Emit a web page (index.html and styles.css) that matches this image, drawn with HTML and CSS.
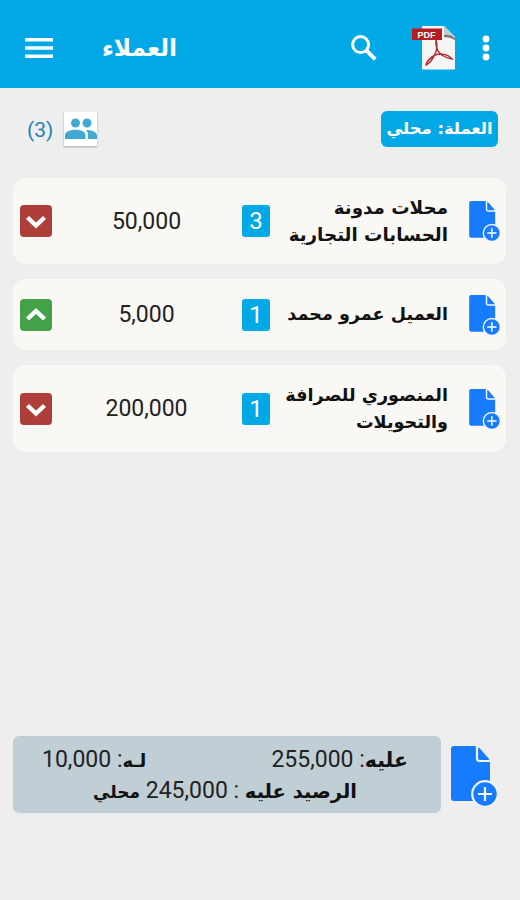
FILE: index.html
```html
<!DOCTYPE html>
<html lang="ar">
<head>
<meta charset="utf-8">
<title>العملاء</title>
<link rel="stylesheet" href="styles.css">
</head>
<body>
<svg class="defs" width="0" height="0">
  <symbol id="doc" viewBox="0 0 46 60">
    <path fill="#167cfd" d="M3 0H26L39 15V55H3Q0 55 0 52V3Q0 0 3 0Z"/>
    <path d="M28 1.500L38.500 13.500H28Z" fill="#167cfd"/>
    <path d="M26 0V12.500Q26 15 28.500 15H39.500" fill="none" stroke="#f5f7fa" stroke-width="2.2"/>
    <circle cx="34" cy="48" r="12.800" fill="#167cfd" stroke="#f0f3f7" stroke-width="2.2"/>
    <path d="M34 41V55M27 48H41" stroke="#fff" stroke-width="2.2"/>
  </symbol>
  <symbol id="down" viewBox="0 0 32 32"><path d="M7.500 12.500L16 20.500L24.500 12.500" fill="none" stroke="#fff" stroke-width="4.400"/></symbol>
  <symbol id="up" viewBox="0 0 32 32"><path d="M7.500 20L16 12L24.500 20" fill="none" stroke="#fff" stroke-width="4.400"/></symbol>
</svg>
<header class="bar">
  <svg class="menu" viewBox="0 0 28 20"><path d="M0 1.8H28M0 10H28M0 18.2H28" stroke="#fff" stroke-width="3.4"/></svg>
  <h1 class="title" dir="rtl">العملاء</h1>
  <svg class="search" viewBox="0 0 26 26"><circle cx="9.6" cy="9.6" r="8" fill="none" stroke="#fff" stroke-width="3"/><path d="M15.3 15.3L24.3 24.3" stroke="#fff" stroke-width="4"/></svg>
  <svg class="pdf" viewBox="0 0 44 44">
    <path d="M10 0H32L43 11V43.5H10Z" fill="#f5f5f5"/>
    <path d="M32 0L43 11H34Q32 11 32 9Z" fill="#c8cccf"/>
    <path d="M32 9Q38 8 43 12V14Q38 11 32 11Z" fill="#777"/>
    <path d="M24 14C25.500 19 25 24 23 28C21 33 17 38 14 39C14 36 19 31 23 29C29 27 36 28 40 33C34 32 28 29 25.500 24C24 20 23.500 17 24 14Z" fill="none" stroke="#b42c32" stroke-width="1.5"/>
    <path d="M0 2.500H30V14H0Z" fill="#b71c20"/>
    <text class="pdf-label" x="14.5" y="11.800" text-anchor="middle">PDF</text>
  </svg>
  <svg class="dots" viewBox="0 0 8 26"><g fill="#fff"><circle cx="4" cy="4" r="3.4"/><circle cx="4" cy="13" r="3.4"/><circle cx="4" cy="22" r="3.4"/></g></svg>
</header>
<section class="filters">
  <span class="count">(3)</span>
  <span class="people"><svg viewBox="0 0 32 22"><g fill="#3fa9d1"><circle cx="10.5" cy="5" r="4.5"/><circle cx="22" cy="5" r="4.5"/><path d="M0 21V17C0 13.500 6 11.800 10.500 11.800S20.500 13.500 20.500 17V21ZM21 12C26 11.800 32 14 32 17.500V21H23V17C23 15 22.500 13.500 21 12Z"/></g></svg></span>
  <span class="currency" dir="rtl">العملة: محلي</span>
</section>
<main class="list">
  <article class="card">
    <svg class="state red"><use href="#down"/></svg>
    <span class="amount">50,000</span>
    <span class="num">3</span>
    <span class="name roomy" dir="rtl">محلات مدونة<br>الحسابات التجارية</span>
    <svg class="doc"><use href="#doc"/></svg>
  </article>
  <article class="card short">
    <svg class="state green"><use href="#up"/></svg>
    <span class="amount">5,000</span>
    <span class="num">1</span>
    <span class="name" dir="rtl">العميل عمرو محمد</span>
    <svg class="doc"><use href="#doc"/></svg>
  </article>
  <article class="card">
    <svg class="state red"><use href="#down"/></svg>
    <span class="amount">200,000</span>
    <span class="num">1</span>
    <span class="name" dir="rtl">المنصوري للصرافة<br>والتحويلات</span>
    <svg class="doc"><use href="#doc"/></svg>
  </article>
</main>
<footer class="foot">
  <div class="totals" dir="rtl">
    <div class="row"><span><b class="debit">عليه</b>: 255,000</span><span><b>لـه</b>: 10,000</span></div>
    <div class="balance"><b class="label">الرصيد عليه</b> : 245,000 <b class="unit">محلي</b></div>
  </div>
  <svg class="doc big"><use href="#doc"/></svg>
</footer>
</body>
</html>
```

FILE: styles.css
```css
* { box-sizing: border-box; }
body { margin: 0; width: 520px; height: 900px; overflow: hidden; background: #eee; color: #222; font-family: Roboto, "DejaVu Sans", sans-serif; display: flex; flex-direction: column; }
svg { display: block; flex: none; }
.defs { position: absolute; }
.bar { height: 88px; flex: none; background: #03a9e7; color: #fff; display: flex; align-items: center; padding: 7px 30px 0 25px; }
.menu { width: 28px; height: 20px; }
.title { margin: 0 0 0 49px; width: 75px; font: bold 23.3px/30px "DejaVu Sans", sans-serif; white-space: nowrap; }
.search { width: 26px; height: 26px; margin-left: 174px; }
.pdf { width: 44px; height: 44px; margin-left: 35px; }
.pdf-label { font: bold 9px "Liberation Sans", sans-serif; fill: #fff; }
.dots { width: 8px; height: 26px; margin-left: 26px; }
.filters { height: 90px; flex: none; display: flex; align-items: flex-start; padding: 23px 22px 0 27px; }
.count { width: 37px; font-size: 21px; line-height: 38px; color: #2583b5; }
.people { width: 33px; height: 34px; margin-top: 1px; background: #fff; box-shadow: 0 1px 2px #aaa; display: flex; align-items: center; justify-content: center; }
.people svg { width: 32px; height: 22px; }
.currency { margin-left: auto; width: 117px; height: 36px; border-radius: 6px; background: #03a9e7; color: #fff; font: bold 16.4px/36px "DejaVu Sans", sans-serif; display: flex; justify-content: center; white-space: nowrap; }
.list { display: flex; flex-direction: column; gap: 15px; padding: 0 14px 0 13px; }
.card { height: 86px; background: #f9f8f4; border-radius: 13px; display: flex; align-items: center; padding: 0 6px 0 7px; }
.card.short { height: 71px; }
.card:last-child { height: 87px; }
.state { width: 32px; height: 32px; border-radius: 4px; }
.red { background: #ad3f38; }
.green { background: #43a148; }
.amount { width: 190px; text-align: center; padding-right: 1px; font-size: 23px; }
.num { width: 28px; height: 32px; border-radius: 3px; background: #03a9e7; color: #fff; font-size: 24px; line-height: 33px; text-align: center; }
.name { width: 178px; font: bold 17.6px/27px "DejaVu Sans", sans-serif; color: #111; white-space: nowrap; }
.name.roomy { font-size: 18.3px; }
.doc { width: 31px; height: 40px; margin-left: 21px; }
.foot { display: flex; align-items: flex-start; margin-top: 284px; padding-left: 13px; }
.totals { width: 428px; height: 77px; border-radius: 6px; background: #c0ced5; padding: 8px 33px 0 29px; font-size: 23px; line-height: 31px; white-space: nowrap; }
.totals b { font: bold 18px/20px "DejaVu Sans", sans-serif; color: #111; }
.totals .debit { font-size: 20.5px; }
.totals .label { font-size: 19.5px; }
.totals .unit { font-size: 17px; }
.row { display: flex; justify-content: space-between; height: 31px; }
.balance { text-align: center; }
.doc.big { width: 46px; height: 60px; margin: 10px 0 0 10px; }
```
